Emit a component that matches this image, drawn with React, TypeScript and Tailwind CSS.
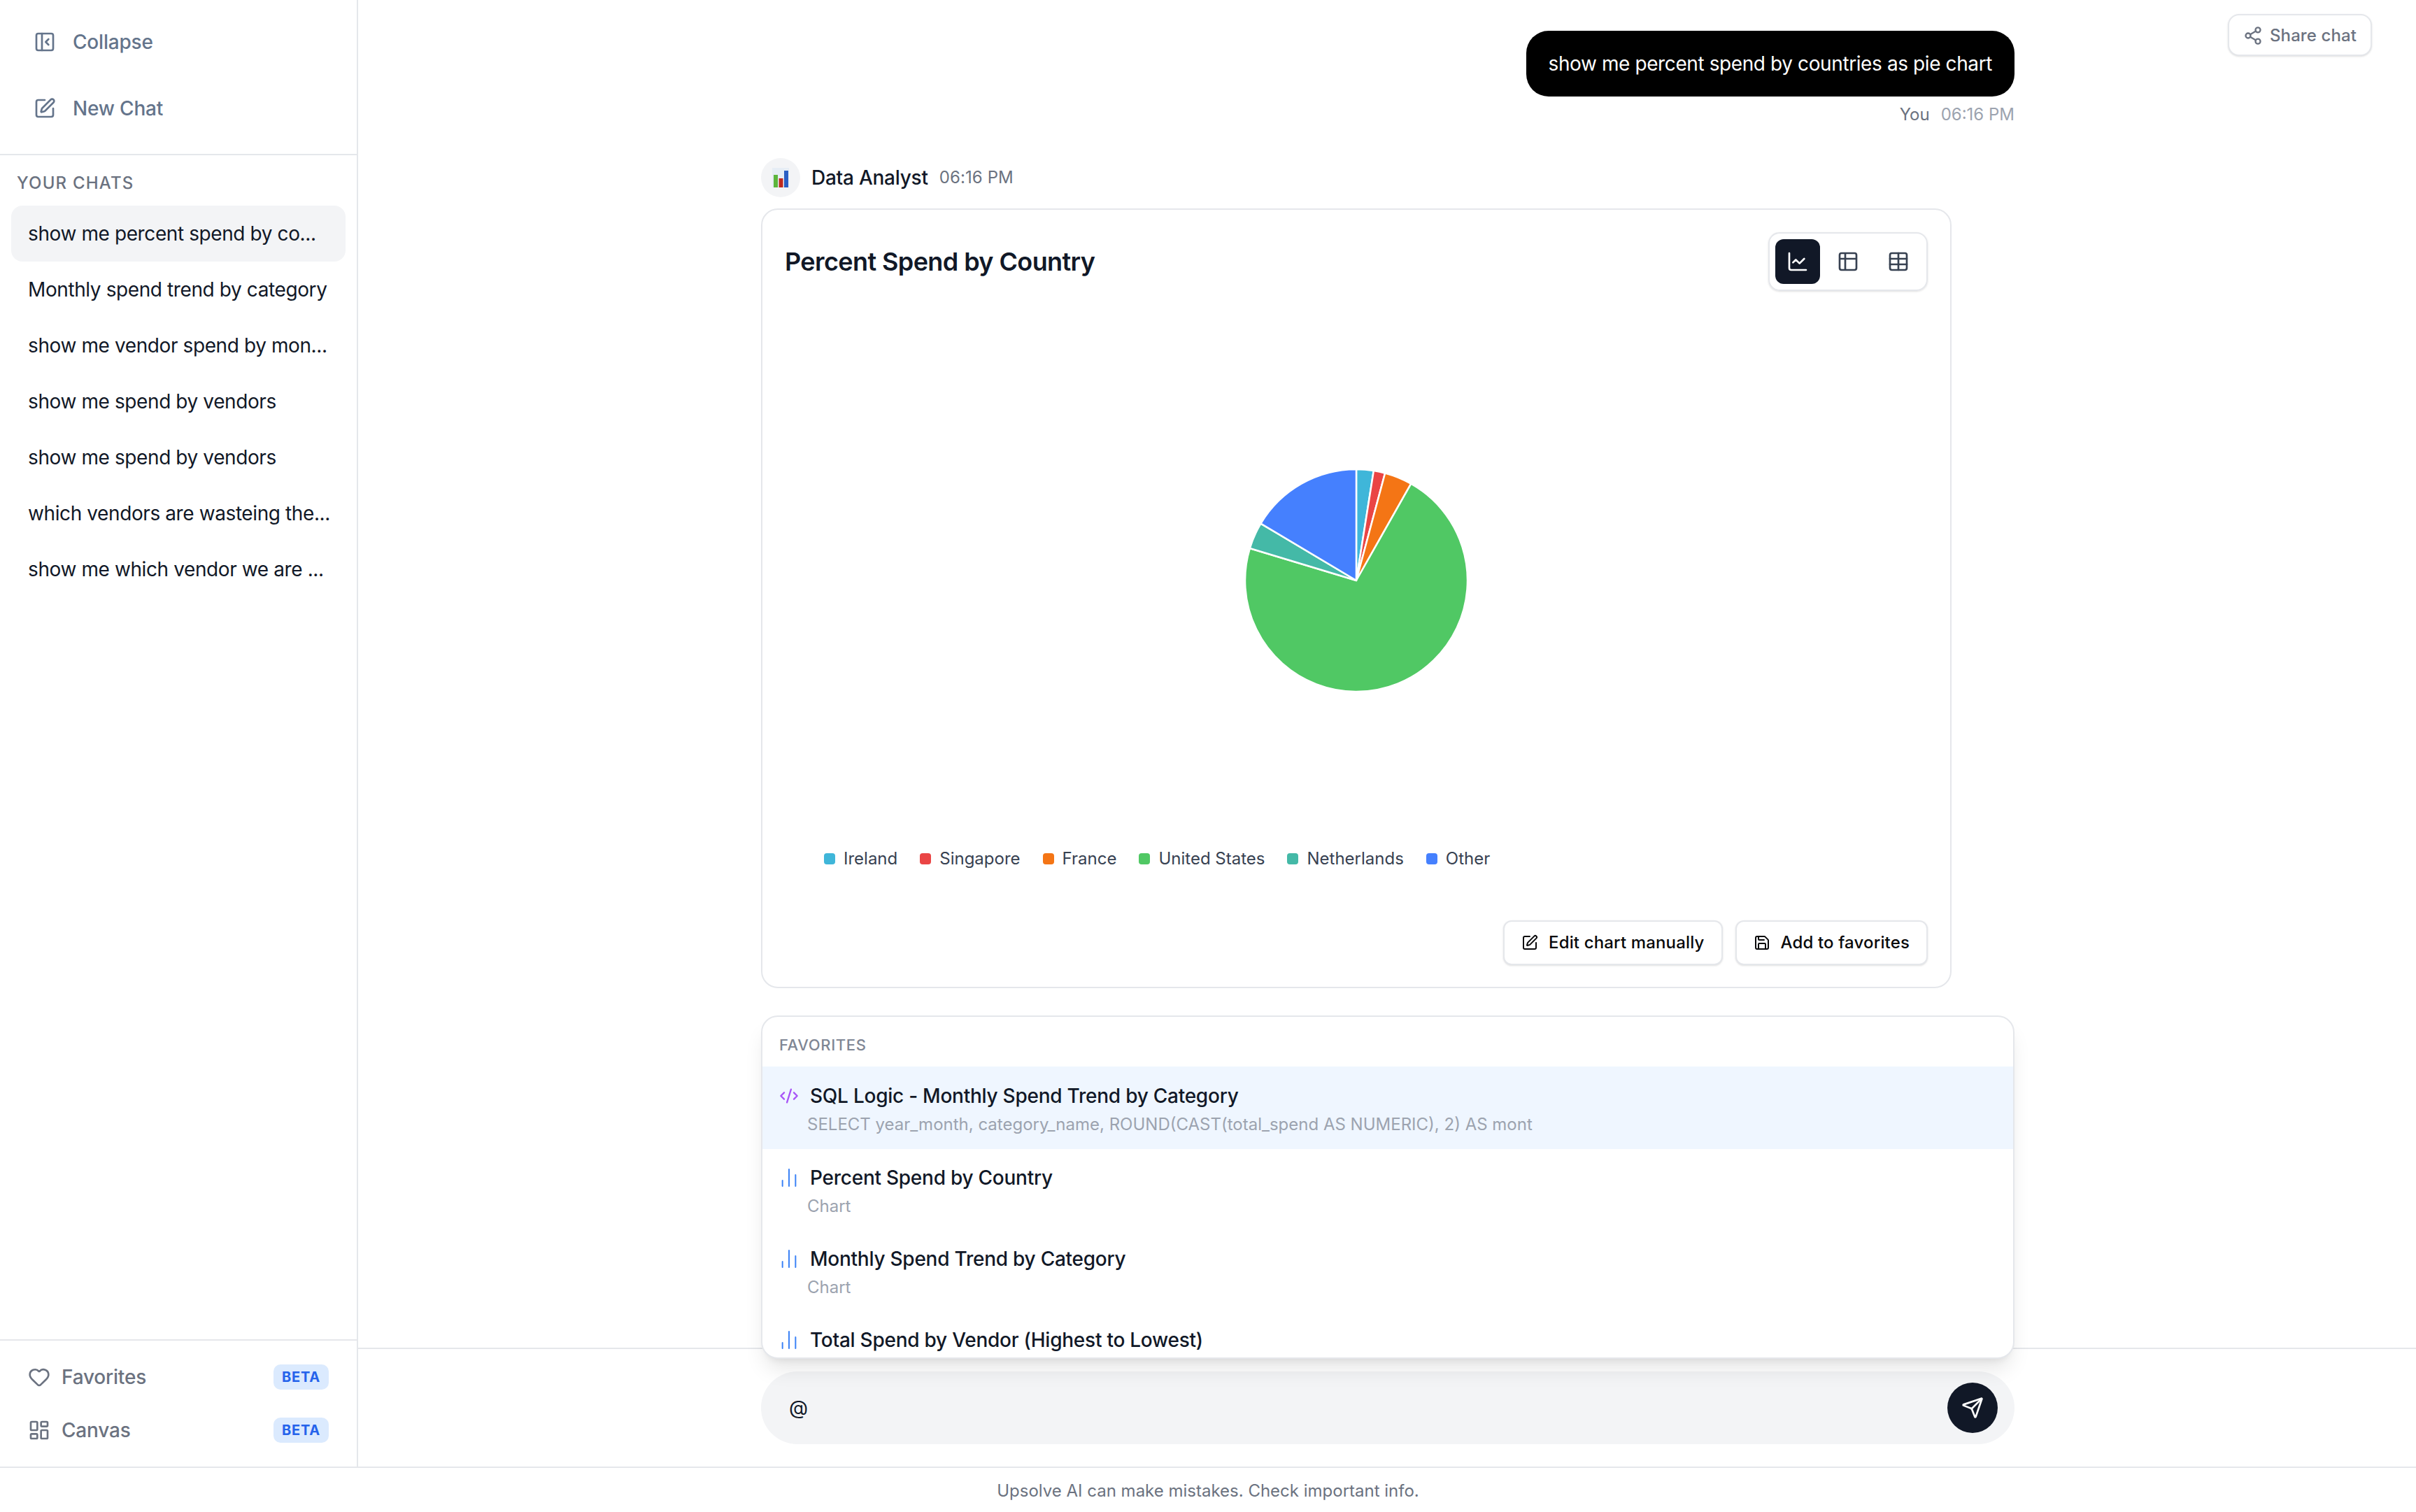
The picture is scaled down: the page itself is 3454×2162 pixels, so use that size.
import { CodeXml, ChartLine, ChartNoAxesColumn, Heart, LayoutDashboard, PanelLeftClose, Save, Send, Share2, SquarePen, Table, Table2 } from "lucide-react";

const chats = [
  "show me percent spend by co...",
  "Monthly spend trend by category",
  "show me vendor spend by mon...",
  "show me spend by vendors",
  "show me spend by vendors",
  "which vendors are wasteing the...",
  "show me which vendor we are ...",
];

const legend = [
  { name: "Ireland", color: "bg-[#3fb6d9]" },
  { name: "Singapore", color: "bg-[#ea4545]" },
  { name: "France", color: "bg-[#f47515]" },
  { name: "United States", color: "bg-[#50c864]" },
  { name: "Netherlands", color: "bg-[#44b9a7]" },
  { name: "Other", color: "bg-[#4580fe]" },
];

// start and end angle in degrees, clockwise from the top
const slices = [
  { from: 0, to: 9, fill: "#3fb6d9" },
  { from: 9, to: 15, fill: "#ea4545" },
  { from: 15, to: 29.5, fill: "#f47515" },
  { from: 29.5, to: 286.8, fill: "#50c864" },
  { from: 286.8, to: 300.8, fill: "#44b9a7" },
  { from: 300.8, to: 360, fill: "#4580fe" },
];

const favorites = [
  { title: "SQL Logic - Monthly Spend Trend by Category", sub: "SELECT year_month, category_name, ROUND(CAST(total_spend AS NUMERIC), 2) AS mont", sql: true },
  { title: "Percent Spend by Country", sub: "Chart", sql: false },
  { title: "Monthly Spend Trend by Category", sub: "Chart", sql: false },
  { title: "Total Spend by Vendor (Highest to Lowest)", sub: "", sql: false },
];

const slicePath = (from: number, to: number) => {
  const r = 159;
  const c = 160;
  const point = (deg: number) => {
    const rad = (deg * Math.PI) / 180;
    return `${c + r * Math.sin(rad)} ${c - r * Math.cos(rad)}`;
  };
  const large = to - from > 180 ? 1 : 0;
  return `M${c} ${c} L${point(from)} A${r} ${r} 0 ${large} 1 ${point(to)} Z`;
};

const PieChart = () => (
  <svg width="320" height="320" viewBox="0 0 320 320">
    {slices.map((s) => (
      <path key={s.from} d={slicePath(s.from, s.to)} fill={s.fill} stroke="#fff" strokeWidth="2.5" strokeLinejoin="round" />
    ))}
  </svg>
);

const BarEmoji = () => (
  <svg width="24" height="28" viewBox="0 0 24 28">
    <rect width="24" height="28" fill="#e6edf5" />
    <rect x="2" y="10" width="6" height="18" fill="#5cb53c" />
    <rect x="9.5" y="15" width="6" height="13" fill="#c02a1f" />
    <rect x="17" y="4" width="6" height="24" fill="#2a5fc4" />
  </svg>
);

const BetaBadge = () => (
  <span className="flex h-[36px] w-[79px] items-center justify-center rounded-[10px] bg-[#dbeafe] text-[20px] font-bold tracking-[0.8px] text-[#2563eb]">
    BETA
  </span>
);

export default function App() {
  return (
    <div className="flex h-[2162px] w-[3454px] flex-col overflow-hidden bg-white font-['Inter',sans-serif] text-[28px] text-[#111827]">
      <div className="flex min-h-0 flex-1">
        {/* Sidebar */}
        <aside className="flex w-[512px] shrink-0 flex-col border-r-2 border-[#e5e7eb]">
          <div className="h-[222px] shrink-0 border-b-2 border-[#e5e7eb] pt-[12px]">
            <button className="flex h-[95px] w-full items-center gap-[24px] pl-[48px] font-medium tracking-[-0.2px] text-[#64748b]">
              <PanelLeftClose size={32} />
              Collapse
            </button>
            <button className="flex h-[95px] w-full items-center gap-[24px] pl-[48px] font-medium tracking-[-0.2px] text-[#64748b]">
              <SquarePen size={32} />
              New Chat
            </button>
          </div>
          <div className="min-h-0 flex-1 px-[16px]">
            <div className="flex h-[72px] items-center pl-[8px] pt-[8px] text-[24px] font-medium tracking-[1.2px] text-[#6b7280]">
              YOUR CHATS
            </div>
            {chats.map((chat, i) => (
              <div
                key={i}
                className={
                  i === 0
                    ? "flex h-[80px] items-center whitespace-nowrap rounded-[16px] bg-[#f3f4f6] pl-[24px] tracking-[-0.4px]"
                    : "flex h-[80px] items-center whitespace-nowrap pl-[24px] tracking-[-0.4px]"
                }
              >
                {chat}
              </div>
            ))}
          </div>
          <div className="h-[182px] shrink-0 border-t-2 border-[#e5e7eb] px-[40px] pt-[14px]">
            <div className="flex h-[76px] items-center justify-between font-medium tracking-[-0.2px] text-[#6b7280]">
              <span className="flex items-center gap-[16px]">
                <Heart size={32} />
                Favorites
              </span>
              <BetaBadge />
            </div>
            <div className="flex h-[76px] items-center justify-between font-medium tracking-[-0.2px] text-[#6b7280]">
              <span className="flex items-center gap-[16px]">
                <LayoutDashboard size={32} />
                Canvas
              </span>
              <BetaBadge />
            </div>
          </div>
        </aside>

        {/* Main */}
        <main className="relative flex min-w-0 flex-1 flex-col">
          <button className="absolute right-[63px] top-[20px] flex h-[60px] w-[206px] items-center gap-[10px] rounded-[16px] border-2 border-[#e5e7eb] bg-white pl-[20px] pt-[1px] text-[24px] font-medium tracking-[0.1px] text-[#6b7280] shadow-sm">
            <Share2 size={28} />
            Share chat
          </button>

          <div className="min-h-0 flex-1 border-b-2 border-[#e5e7eb] pl-[2px] pt-[44px]">
            <div className="mx-auto w-[1792px]">
              <div className="flex flex-col items-end">
                <div className="flex h-[94px] items-center rounded-[32px] bg-black px-[32px] tracking-[-0.4px] text-white">
                  show me percent spend by countries as pie chart
                </div>
                <div className="mt-[10px] flex h-[32px] items-center gap-[16px] text-[24px]">
                  <span className="text-[#6b7280]">You</span>
                  <span className="text-[#9ca3af]">06:16 PM</span>
                </div>
              </div>

              <div className="mt-[46px] flex h-[56px] items-center">
                <div className="flex size-[56px] items-center justify-center rounded-full bg-[#f3f4f6]">
                  <BarEmoji />
                </div>
                <span className="ml-[16px] font-medium tracking-[-0.25px]">Data Analyst</span>
                <span className="ml-[16px] text-[24px] tracking-[0.1px] text-[#6b7280]">06:16 PM</span>
              </div>

              <div className="mt-[16px] h-[1115px] w-[1702px] rounded-[24px] border-2 border-[#e5e7eb] bg-white p-[32px]">
                <div className="flex items-center justify-between">
                  <h2 className="text-[36px] font-semibold tracking-[-0.6px]">Percent Spend by Country</h2>
                  <div className="flex gap-[8px] rounded-[16px] border-2 border-[#e5e7eb] p-[8px] shadow-sm">
                    <button className="flex size-[64px] items-center justify-center rounded-[12px] bg-[#111827] text-white">
                      <ChartLine size={32} />
                    </button>
                    <button className="flex size-[64px] items-center justify-center rounded-[12px] text-[#374151]">
                      <Table2 size={32} />
                    </button>
                    <button className="flex size-[64px] items-center justify-center rounded-[12px] text-[#374151]">
                      <Table size={32} />
                    </button>
                  </div>
                </div>

                <div className="mt-[254px] flex justify-center">
                  <PieChart />
                </div>

                <div className="mt-[222px] flex h-[32px] items-center gap-[32px] pl-[56px] text-[24px] text-[#374151]">
                  {legend.map((item) => (
                    <span key={item.name} className="flex items-center gap-[12px]">
                      <span className={`size-[16px] rounded-[4px] ${item.color}`} />
                      {item.name}
                    </span>
                  ))}
                </div>

                <div className="mt-[72px] flex justify-end gap-[18px] text-[24px] font-medium tracking-[0.15px] text-[#09090b]">
                  <button className="flex h-[64px] items-center gap-[15px] rounded-[12px] border-2 border-[#e5e7eb] bg-white px-[24px] shadow-sm">
                    <SquarePen size={24} />
                    Edit chart manually
                  </button>
                  <button className="flex h-[64px] items-center gap-[15px] rounded-[12px] border-2 border-[#e5e7eb] bg-white px-[24px] shadow-sm">
                    <Save size={24} />
                    Add to favorites
                  </button>
                </div>
              </div>
            </div>
          </div>

          <div className="h-[168px] shrink-0 pl-[2px] pt-[32px]">
            <div className="relative mx-auto flex h-[104px] w-[1792px] items-center justify-between rounded-full bg-[#f3f4f6] pl-[40px] pr-[24px]">
              <span>@</span>
              <button className="flex size-[72px] items-center justify-center rounded-full bg-[#111827] text-white">
                <Send size={32} />
              </button>

              {/* Favorites picker, sits over the chat */}
              <div className="absolute bottom-[122px] left-0 h-[491px] w-full overflow-hidden rounded-[24px] border-2 border-[#e5e7eb] bg-white shadow-[0_20px_30px_-6px_rgba(0,0,0,0.1),0_8px_12px_-8px_rgba(0,0,0,0.1)]">
                <div className="flex h-[71px] items-center pl-[24px] pt-[10px] text-[22px] font-medium tracking-[0.65px] text-[#7f8694]">
                  FAVORITES
                </div>
                {favorites.map((fav, i) => (
                  <div key={fav.title} className={i === 0 ? "h-[118px] bg-[#eff6ff] pl-[24px] pt-[24px]" : "h-[116px] pl-[24px] pt-[23px]"}>
                    <div className="flex h-[36px] items-center gap-[16px] font-medium tracking-[-0.25px]">
                      {fav.sql ? (
                        <CodeXml size={28} className="text-[#a855f7]" />
                      ) : (
                        <ChartNoAxesColumn size={32} strokeWidth={1.5} className="-mx-[2px] text-[#3b82f6]" />
                      )}
                      {fav.title}
                    </div>
                    {fav.sub && <div className="mt-[7px] pl-[40px] text-[24px] leading-[32px] text-[#9ca3af]">{fav.sub}</div>}
                  </div>
                ))}
              </div>
            </div>
          </div>
        </main>
      </div>

      <footer className="flex h-[65px] shrink-0 items-center justify-center border-t-2 border-[#e5e7eb] pt-[3px] text-[24px] text-[#6b7280]">
        Upsolve AI can make mistakes. Check important info.
      </footer>
    </div>
  );
}
